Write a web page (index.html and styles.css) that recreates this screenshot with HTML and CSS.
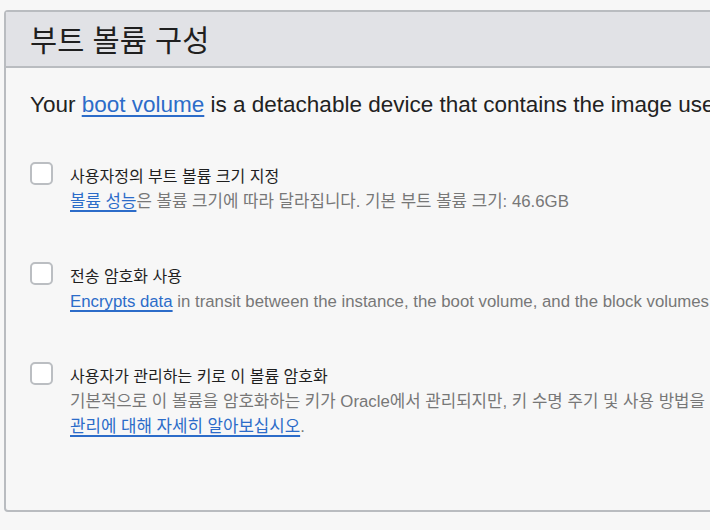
FILE: index.html
```html
<!DOCTYPE html>
<html lang="ko">
<head>
<meta charset="utf-8">
<link rel="stylesheet" href="styles.css">
</head>
<body>
<section class="panel">
  <header class="panel-head"><h2 class="title">부트 볼륨 구성</h2></header>
  <div class="panel-body">
    <p class="intro">Your <a href="#">boot volume</a> is a detachable device that contains the image used to boot the compute instance.</p>
    <div class="opt">
      <span class="box"></span>
      <div class="opt-text">
        <div class="label">사용자정의 부트 볼륨 크기 지정</div>
        <div class="desc"><a href="#">볼륨 성능</a>은 볼륨 크기에 따라 달라집니다. 기본 부트 볼륨 크기: 46.6GB</div>
      </div>
    </div>
    <div class="opt">
      <span class="box"></span>
      <div class="opt-text">
        <div class="label">전송 암호화 사용</div>
        <div class="desc"><a href="#">Encrypts data</a> in transit between the instance, the boot volume, and the block volumes.</div>
      </div>
    </div>
    <div class="opt">
      <span class="box"></span>
      <div class="opt-text">
        <div class="label">사용자가 관리하는 키로 이 볼륨 암호화</div>
        <div class="desc">기본적으로 이 볼륨을 암호화하는 키가 Oracle에서 관리되지만, 키 수명 주기 및 사용 방법을 더 세밀하게 제어할 수 있습니다.</div>
        <div class="desc"><a href="#">관리에 대해 자세히 알아보십시오</a>.</div>
      </div>
    </div>
  </div>
</section>
</body>
</html>
```
FILE: styles.css
```css
html, body {
  margin: 0;
  padding: 0;
  background: #f7f7f7;
  overflow: hidden;
  width: 710px;
  height: 530px;
}
body {
  font-family: "Liberation Sans", "Noto Sans CJK KR", sans-serif;
  padding: 10px 0 0 4px;
  box-sizing: border-box;
}
a {
  color: #2c6cc9;
  text-decoration: underline;
  text-decoration-thickness: 2px;
  text-underline-offset: 3px;
}
.panel {
  width: 900px;
  height: 502px;
  box-sizing: border-box;
  border: 2px solid #b9bcc0;
  border-radius: 4px;
  background: #f7f7f7;
  display: flex;
  flex-direction: column;
}
.panel-head {
  height: 54px;
  background: #e1e2e6;
  border-bottom: 2px solid #b9bcc0;
  display: flex;
  align-items: center;
  padding-left: 24px;
}
.title {
  margin: 0;
  font-family: "Noto Sans CJK KR", sans-serif;
  font-weight: 400;
  font-size: 29.5px;
  color: #1f1f1f;
  line-height: 1;
}
.panel-body {
  padding: 23px 0 0 24px;
}
.intro {
  margin: 0;
  font-size: 22.5px;
  line-height: 28px;
  color: #222;
  white-space: nowrap;
}
.opt {
  display: flex;
  gap: 17px;
  height: 100px;
}
.intro + .opt {
  margin-top: 43px;
}
.box {
  flex: none;
  width: 23px;
  height: 23px;
  box-sizing: border-box;
  border: 2px solid #bbbec2;
  border-radius: 5px;
  background: #fff;
}
.opt-text {
  padding-top: 3px;
}
.label {
  font-size: 16px;
  line-height: 24px;
  color: #1f1f1f;
  white-space: nowrap;
}
.desc {
  font-size: 16.8px;
  line-height: 25px;
  color: #777;
  white-space: nowrap;
}
```
